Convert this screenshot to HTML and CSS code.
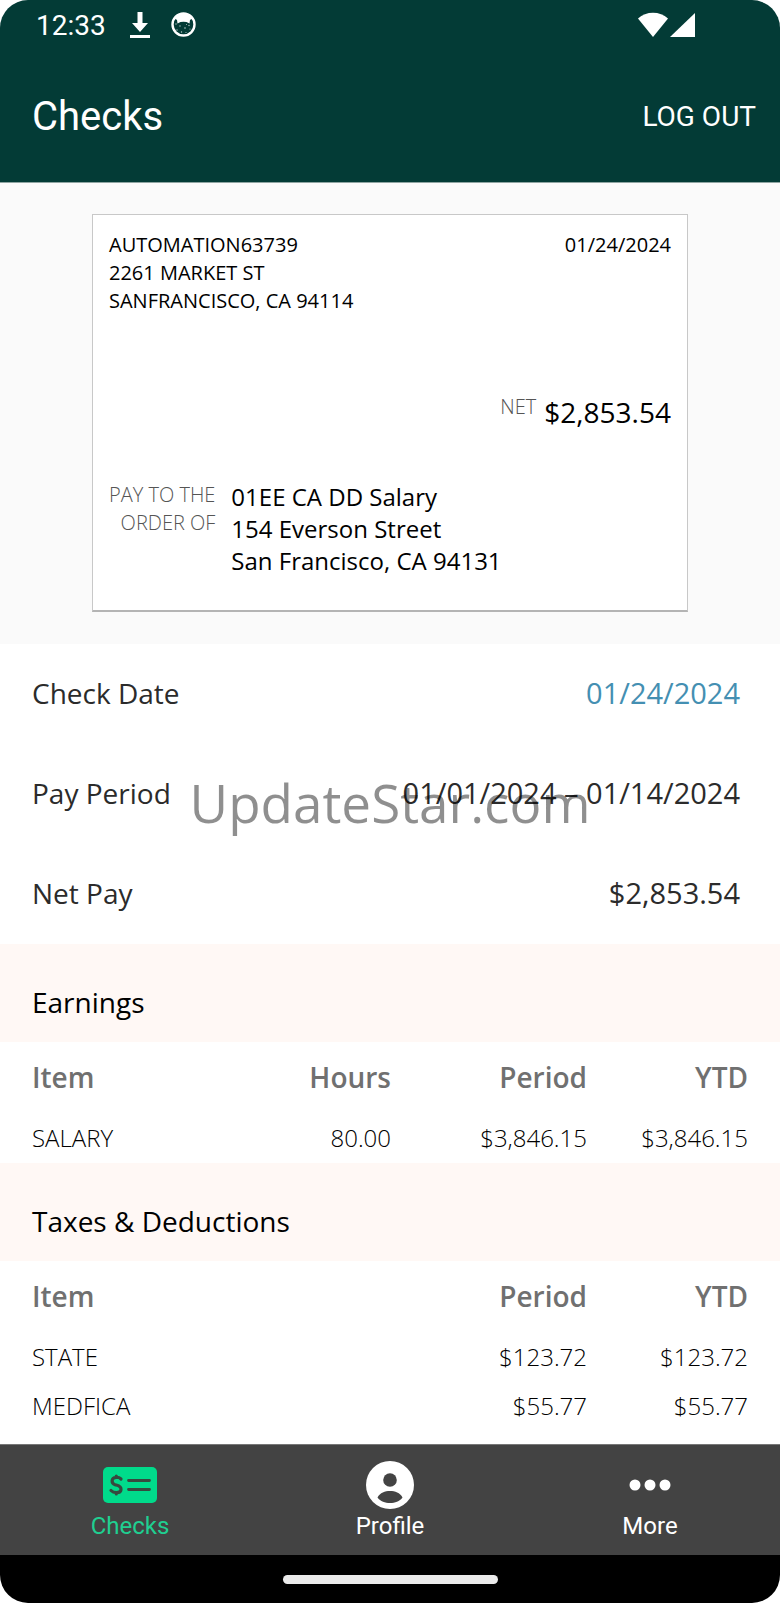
FILE: index.html
```html
<!DOCTYPE html>
<html lang="en">
<head>
  <meta charset="UTF-8" />
  <title>Checks</title>
  <meta name="viewport" content="width=device-width, initial-scale=1.0" />
  <link rel="stylesheet" href="styles.css">
</head>
<body>
  <div class="screen">

    <header class="top">
      <div class="status-bar">
        <div class="status-left">
          <span class="clock">12:33</span>
          <svg class="icon-download" width="20" height="28" viewBox="0 0 20 28" fill="#fff">
            <path d="M7.5 1h5v11H18l-8 9-8-9h5.500z" />
            <rect x="0" y="24" width="20" height="3" />
          </svg>
          <svg class="icon-cat" width="26" height="26" viewBox="0 0 26 26">
            <circle cx="13.500" cy="12.500" r="11" fill="none" stroke="#fff" stroke-width="2.400" />
            <path d="M4 6C6 3 9.500 1.500 13.500 1.500S21 3 23 6l-3 2-.5 3.500-3-1.500a14 14 0 0 0-6 0l-3 1.500L7 8z" fill="#fff" />
            <g fill="#b8cac8">
              <circle cx="6" cy="12" r=".7" /><circle cx="10" cy="14" r=".7" />
              <circle cx="15" cy="16" r=".8" /><circle cx="19" cy="13.500" r=".7" />
              <circle cx="20" cy="17" r=".6" /><circle cx="7" cy="18" r=".7" />
              <circle cx="11.500" cy="20" r=".7" /><circle cx="16" cy="20.500" r=".6" />
              <circle cx="16.500" cy="12.500" r=".5" />
            </g>
          </svg>
        </div>
        <svg class="icon-signal" width="58" height="26" viewBox="0 0 58 26" fill="#fff">
          <path d="M0 6.500C8-1.200 22-1.200 30 6.500L15 25z" />
          <path d="M57 1v24H32z" />
        </svg>
      </div>
      <div class="title-bar">
        <h1>Checks</h1>
        <button type="button" class="logout">LOG OUT</button>
      </div>
    </header>

    <main>
      <section class="check-area">
        <div class="check">
          <div class="check-head">
            <address>AUTOMATION63739<br>2261 MARKET ST<br>SANFRANCISCO, CA 94114</address>
            <span>01/24/2024</span>
          </div>
          <div class="check-net">
            <span class="check-label">NET</span>
            <span class="check-amount">$2,853.54</span>
          </div>
          <div class="check-payee">
            <span class="check-label">PAY TO THE<br>ORDER OF</span>
            <address>01EE CA DD Salary<br>154 Everson Street<br>San Francisco, CA 94131</address>
          </div>
        </div>
      </section>

      <dl class="summary">
        <div class="summary-row">
          <dt>Check Date</dt>
          <dd><a href="#">01/24/2024</a></dd>
        </div>
        <div class="summary-row">
          <dt>Pay Period</dt>
          <dd>01/01/2024 – 01/14/2024</dd>
        </div>
        <div class="summary-row">
          <dt>Net Pay</dt>
          <dd>$2,853.54</dd>
        </div>
      </dl>

      <h2 id="earnings">Earnings</h2>
      <table aria-labelledby="earnings">
        <thead>
          <tr><th>Item</th><th class="hours">Hours</th><th class="period">Period</th><th class="ytd">YTD</th></tr>
        </thead>
        <tbody>
          <tr><td>SALARY</td><td>80.00</td><td>$3,846.15</td><td>$3,846.15</td></tr>
        </tbody>
      </table>

      <h2 id="taxes">Taxes &amp; Deductions</h2>
      <table aria-labelledby="taxes">
        <thead>
          <tr><th>Item</th><th class="period">Period</th><th class="ytd">YTD</th></tr>
        </thead>
        <tbody>
          <tr><td>STATE</td><td>$123.72</td><td>$123.72</td></tr>
          <tr><td>MEDFICA</td><td>$55.77</td><td>$55.77</td></tr>
        </tbody>
      </table>
    </main>

    <nav class="tabs">
      <a href="#" class="tab active">
        <svg width="54" height="48" viewBox="0 0 54 48">
          <rect x="0" y="6" width="54" height="36" rx="5" fill="#00db8b" />
          <g fill="none" stroke="#37493f" stroke-linecap="round">
            <path d="M18 18C16.500 16.500 14.800 16.100 13 16.300c-5 .5-5 6.200-1 7.400 3 .9 6.500 1.200 6 5-.5 4-7.500 3.500-10 .8M13.300 15v1.500M13.300 31.500v1.500" stroke-width="3.200" />
            <path d="M25.500 19.500h21M25.500 28.500h21" stroke-width="2.800" />
          </g>
        </svg>
        <span>Checks</span>
      </a>
      <a href="#" class="tab">
        <svg width="48" height="48" viewBox="0 0 48 48">
          <circle cx="24" cy="24" r="24" fill="#fff" />
          <circle cx="24" cy="19" r="6.800" fill="#434343" />
          <path d="M11.500 36.500C14 31.500 19 30 24 30s10 1.500 12.500 6.500C33.500 40.500 29 42 24 42s-9.500-1.500-12.500-5.500z" fill="#434343" />
        </svg>
        <span>Profile</span>
      </a>
      <a href="#" class="tab">
        <svg width="42" height="48" viewBox="0 0 42 48" fill="#fff">
          <circle cx="6" cy="24" r="5.500" />
          <circle cx="21" cy="24" r="5.500" />
          <circle cx="36" cy="24" r="5.500" />
        </svg>
        <span>More</span>
      </a>
    </nav>

    <div class="home-bar"><div class="home-handle"></div></div>

    <div class="watermark">UpdateStar.com</div>
  </div>
</body>
</html>
```

FILE: styles.css
```css
* {
  box-sizing: border-box;
}

body {
  margin: 0;
  background: #fff;
  color: #000;
  font-family: "Open Sans", "Noto Sans", sans-serif;
}

.screen {
  position: relative;
  display: flex;
  flex-direction: column;
  min-height: 100vh;
  background: #fff;
  border-radius: 28px;
  overflow: hidden;
}

/* header */
.top {
  background: #033b36;
  color: #fff;
  font-family: Roboto, sans-serif;
  border-bottom: 1px solid #8fa5a2;
}

.status-bar {
  display: flex;
  justify-content: space-between;
  align-items: center;
  height: 50px;
  padding: 0 84px 0 36px;
}

.status-left {
  display: flex;
  align-items: center;
  gap: 20px;
}

.clock {
  font-size: 28px;
  margin-right: 4px;
}

.title-bar {
  display: flex;
  justify-content: space-between;
  align-items: center;
  height: 132px;
  padding: 0 24px 0 32px;
}

h1 {
  margin: 0;
  font-size: 40px;
  font-weight: 400;
}

.logout {
  padding: 0;
  border: none;
  background: none;
  color: inherit;
  font-family: inherit;
  font-size: 28px;
  cursor: pointer;
}

/* check */
main {
  flex: 1;
}

.check-area {
  padding: 31px 32px 32px;
  background: #fafafa;
}

.check {
  max-width: 596px;
  margin: 0 auto;
  padding: 16px 16px 33px;
  background: #fff;
  border: 1px solid #c8c8c8;
  border-bottom: 2px solid #b4b4b4;
  font-size: 20px;
  line-height: 28px;
}

address {
  font-style: normal;
}

.check-head {
  display: flex;
  justify-content: space-between;
}

.check-net {
  display: flex;
  justify-content: flex-end;
  gap: 8px;
  margin: 78px 0 50px;
}

.check-amount {
  font-size: 28px;
  line-height: 38px;
}

.check-label {
  color: #555;
  font-weight: 300;
  text-align: right;
}

.check-payee {
  display: flex;
  gap: 16px;
}

.check-payee address {
  font-size: 24px;
  line-height: 32px;
}

/* summary */
.summary {
  margin: 0;
  color: #2b2b2b;
  font-size: 29px;
  line-height: 40px;
}

.summary-row {
  display: flex;
  justify-content: space-between;
  padding: 29px 40px 31px 32px;
}

.summary dt {
  font-size: 28px;
}

.summary dd {
  margin: 0;
}

.summary a {
  color: #448fb2;
  text-decoration: none;
}

/* tables */
h2 {
  margin: 0;
  padding: 39px 32px 21px;
  background: #fff8f5;
  font-size: 28px;
  line-height: 38px;
  font-weight: 400;
}

table {
  width: 100%;
  padding: 0 32px 1px;
  border-spacing: 0;
  table-layout: fixed;
}

th {
  padding: 16px 0;
  color: #707070;
  font-size: 28px;
  line-height: 39px;
  font-weight: 600;
  text-align: right;
}

td {
  padding: 8px 0;
  color: #000;
  font-size: 24px;
  line-height: 33px;
  font-weight: 300;
  text-align: right;
}

th:first-child,
td:first-child {
  text-align: left;
}

.hours {
  width: 120px;
}

.period {
  width: 196px;
}

.ytd {
  width: 161px;
}

/* bottom tabs */
.tabs {
  display: flex;
  padding: 16px 0 15px;
  background: #434343;
  border-top: 1px solid #777;
  font-family: Roboto, sans-serif;
}

.tab {
  flex: 1;
  display: flex;
  flex-direction: column;
  align-items: center;
  gap: 3px;
  color: #fff;
  font-size: 24px;
  line-height: 28px;
  text-decoration: none;
}

.tab.active {
  color: #1fcf91;
}

.home-bar {
  display: flex;
  justify-content: center;
  align-items: center;
  height: 48px;
  background: #000;
}

.home-handle {
  width: 215px;
  height: 9px;
  border-radius: 5px;
  background: #ebebeb;
}

.watermark {
  position: absolute;
  top: 50%;
  left: 50%;
  transform: translate(-50%, -50%);
  color: rgba(0, 0, 0, 0.44);
  font-size: 53px;
  pointer-events: none;
}
```
